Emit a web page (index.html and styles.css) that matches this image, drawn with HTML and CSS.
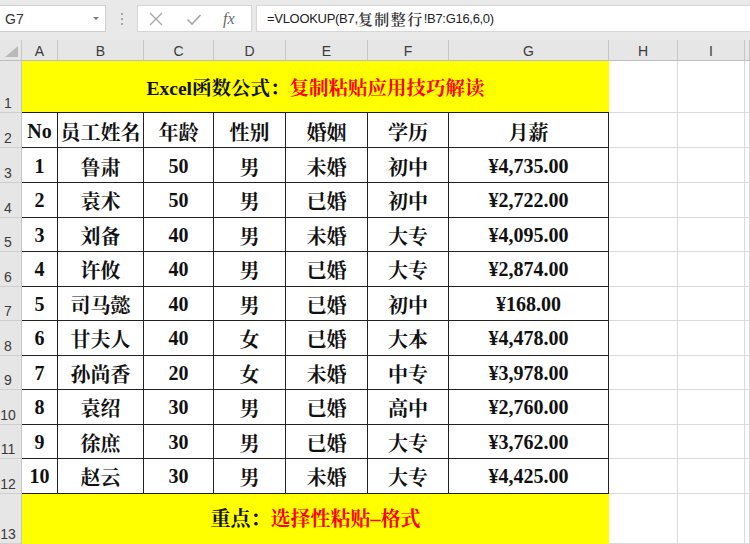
FILE: index.html
```html
<!DOCTYPE html>
<html lang="zh">
<head>
<meta charset="utf-8">
<title>Excel</title>
<link rel="stylesheet" href="styles.css">
</head>
<body>
<div class="app">
  <div class="fbar">
    <div class="namebox"><span class="ref">G7</span><span class="caret"></span></div>
    <div class="handle"><i></i><i></i><i></i></div>
    <div class="btns">
      <svg class="ico" width="16" height="14" viewBox="0 0 16 14"><path d="M2 1 L14 13 M14 1 L2 13" stroke="#a6a6a6" stroke-width="1.3" fill="none"/></svg>
      <svg class="ico" width="16" height="14" viewBox="0 0 16 14"><path d="M1.5 7.5 L6 12 L14.5 3" stroke="#a6a6a6" stroke-width="1.6" fill="none"/></svg>
      <span class="fx">fx</span>
    </div>
    <div class="formula">=VLOOKUP(B7,<span class="cjk">复制整行</span>!B7:G16,6,0)</div>
  </div>
  <div class="sheet">
    <div class="corner"><svg width="13" height="11" viewBox="0 0 13 11"><path d="M13 0 L13 11 L0 11 Z" fill="#b9b9b9"/></svg></div>
    <div class="ch">A</div><div class="ch">B</div><div class="ch">C</div><div class="ch">D</div><div class="ch">E</div><div class="ch">F</div><div class="ch">G</div><div class="ch">H</div><div class="ch">I</div><div class="ch"></div>

    <div class="rh">1</div>
    <div class="banner top"><span class="blk">Excel函数公式：</span><span class="red">复制粘贴应用技巧解读</span></div>
    <div class="g"></div><div class="g"></div><div class="g"></div>

    <div class="rh">2</div>
    <div class="t">No</div><div class="t">员工姓名</div><div class="t">年龄</div><div class="t">性别</div><div class="t">婚姻</div><div class="t">学历</div><div class="t">月薪</div>
    <div class="g"></div><div class="g"></div><div class="g"></div>

    <div class="rh">3</div>
    <div class="t">1</div><div class="t">鲁肃</div><div class="t">50</div><div class="t">男</div><div class="t">未婚</div><div class="t">初中</div><div class="t">¥4,735.00</div>
    <div class="g"></div><div class="g"></div><div class="g"></div>

    <div class="rh">4</div>
    <div class="t">2</div><div class="t">袁术</div><div class="t">50</div><div class="t">男</div><div class="t">已婚</div><div class="t">初中</div><div class="t">¥2,722.00</div>
    <div class="g"></div><div class="g"></div><div class="g"></div>

    <div class="rh">5</div>
    <div class="t">3</div><div class="t">刘备</div><div class="t">40</div><div class="t">男</div><div class="t">未婚</div><div class="t">大专</div><div class="t">¥4,095.00</div>
    <div class="g"></div><div class="g"></div><div class="g"></div>

    <div class="rh">6</div>
    <div class="t">4</div><div class="t">许攸</div><div class="t">40</div><div class="t">男</div><div class="t">已婚</div><div class="t">大专</div><div class="t">¥2,874.00</div>
    <div class="g"></div><div class="g"></div><div class="g"></div>

    <div class="rh">7</div>
    <div class="t">5</div><div class="t">司马懿</div><div class="t">40</div><div class="t">男</div><div class="t">已婚</div><div class="t">初中</div><div class="t">¥168.00</div>
    <div class="g"></div><div class="g"></div><div class="g"></div>

    <div class="rh">8</div>
    <div class="t">6</div><div class="t">甘夫人</div><div class="t">40</div><div class="t">女</div><div class="t">已婚</div><div class="t">大本</div><div class="t">¥4,478.00</div>
    <div class="g"></div><div class="g"></div><div class="g"></div>

    <div class="rh">9</div>
    <div class="t">7</div><div class="t">孙尚香</div><div class="t">20</div><div class="t">女</div><div class="t">未婚</div><div class="t">中专</div><div class="t">¥3,978.00</div>
    <div class="g"></div><div class="g"></div><div class="g"></div>

    <div class="rh">10</div>
    <div class="t">8</div><div class="t">袁绍</div><div class="t">30</div><div class="t">男</div><div class="t">已婚</div><div class="t">高中</div><div class="t">¥2,760.00</div>
    <div class="g"></div><div class="g"></div><div class="g"></div>

    <div class="rh">11</div>
    <div class="t">9</div><div class="t">徐庶</div><div class="t">30</div><div class="t">男</div><div class="t">已婚</div><div class="t">大专</div><div class="t">¥3,762.00</div>
    <div class="g"></div><div class="g"></div><div class="g"></div>

    <div class="rh">12</div>
    <div class="t">10</div><div class="t">赵云</div><div class="t">30</div><div class="t">男</div><div class="t">未婚</div><div class="t">大专</div><div class="t">¥4,425.00</div>
    <div class="g"></div><div class="g"></div><div class="g"></div>

    <div class="rh">13</div>
    <div class="banner bottom"><span class="blk">重点：</span><span class="red">选择性粘贴–格式</span></div>
    <div class="g"></div><div class="g"></div><div class="g"></div>
  </div>
</div>
</body>
</html>
```

FILE: styles.css
```css
* { box-sizing: border-box; }
html, body { margin: 0; padding: 0; }
body { width: 750px; height: 544px; overflow: hidden; background: #e9e9e9; }
.app { width: 750px; height: 544px; display: flex; flex-direction: column; }

.fbar {
  height: 40px;
  flex: none;
  display: flex;
  align-items: flex-start;
  padding-top: 5px;
  background: #e9e9e9;
  font-family: "Liberation Sans", "Noto Sans CJK SC", sans-serif;
}
.namebox {
  width: 106px;
  height: 27px;
  background: #fff;
  border: 1px solid #cfcfcf;
  border-left: none;
  display: flex;
  align-items: center;
  justify-content: space-between;
  padding: 0 6px 0 5px;
}
.ref { font-size: 14px; color: #333; }
.caret {
  width: 0; height: 0;
  border-left: 3px solid transparent;
  border-right: 3px solid transparent;
  border-top: 3px solid #7a7a7a;
}
.handle {
  width: 31px;
  height: 27px;
  display: flex;
  flex-direction: column;
  align-items: center;
  justify-content: center;
  gap: 3px;
}
.handle i { display: block; width: 2px; height: 2px; background: #a8a8a8; }
.btns {
  width: 115px;
  height: 27px;
  background: #fff;
  border: 1px solid #d6d6d6;
  display: flex;
  align-items: center;
  padding-left: 10px;
  gap: 22px;
}
.ico { display: block; }
.fx {
  font-family: "Liberation Serif", serif;
  font-style: italic;
  font-size: 16px;
  color: #6a6a6a;
  margin-left: -1px;
}
.formula {
  flex: 1;
  margin-left: 4px;
  height: 27px;
  background: #fff;
  border: 1px solid #d6d6d6;
  border-right: none;
  padding-left: 10px;
  display: flex;
  align-items: center;
  font-size: 13px;
  color: #222;
  letter-spacing: -0.3px;
  white-space: nowrap;
}
.cjk {
  font-family: "Noto Serif CJK SC", "Noto Sans CJK SC", serif;
  font-size: 15px;
  font-weight: 600;
  letter-spacing: 1.5px;
  color: #333;
}

.sheet {
  flex: 1;
  display: grid;
  grid-template-columns: 22px 36px 86px 70px 72px 82px 81px 160px 69px 67px 1fr;
  grid-template-rows: 21px 52px 35px 35px repeat(9, 34.5px) 1fr;
  background: #fff;
}
.corner {
  background: #e6e6e6;
  border-right: 1px solid #c8c8c8;
  border-bottom: 1px solid #bdbdbd;
  display: flex;
  justify-content: flex-end;
  align-items: flex-end;
  padding: 0 3px 3px 0;
}
.corner svg { display: block; }
.ch {
  background: #e6e6e6;
  border-right: 1px solid #c6c6c6;
  border-bottom: 1px solid #bdbdbd;
  display: flex;
  align-items: center;
  justify-content: center;
  padding-top: 2px;
  font-family: "Liberation Sans", sans-serif;
  font-size: 14px;
  color: #3a3a3a;
}
.rh {
  background: #e6e6e6;
  border-right: 1px solid #c6c6c6;
  border-bottom: 1px solid #cfcfcf;
  display: flex;
  align-items: flex-end;
  justify-content: center;
  padding: 0 5px 1px 0;
  font-family: "Liberation Sans", sans-serif;
  font-size: 14px;
  line-height: 16px;
  color: #3a3a3a;
}
.g {
  background: #fff;
  border-right: 1px solid #dadada;
  border-bottom: 1px solid #dadada;
}
.banner {
  grid-column: span 7;
  background: #ffff00;
  display: flex;
  align-items: center;
  justify-content: center;
  font-family: "Liberation Serif", "Noto Serif CJK SC", "Noto Sans CJK SC", serif;
  font-weight: bold;
  font-size: 19.5px;
}
.banner.top { border-bottom: 1px solid #1e1e1e; padding-top: 0; }
.banner.bottom { padding-bottom: 2px; font-size: 20px; }
.blk { color: #111; }
.red { color: #ff0000; }
.t {
  background: #fff;
  border-right: 1px solid #222;
  border-bottom: 1px solid #222;
  display: flex;
  align-items: center;
  justify-content: center;
  padding-top: 2px;
  font-family: "Liberation Serif", "Noto Serif CJK SC", "Noto Sans CJK SC", serif;
  font-weight: bold;
  font-size: 20px;
  color: #111;
  white-space: nowrap;
}
```
